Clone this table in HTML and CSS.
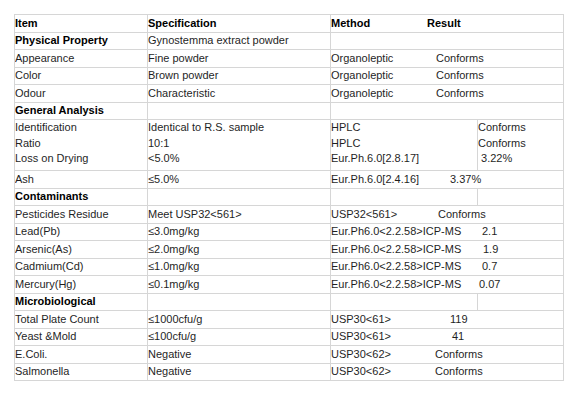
FILE: index.html
```html
<!DOCTYPE html>
<html>
<head>
<meta charset="utf-8">
<link rel="stylesheet" href="styles.css">
</head>
<body>
<table class="spec">
  <colgroup>
    <col class="c1"><col class="c2"><col class="c3"><col class="c4">
  </colgroup>
  <tr class="head">
    <th>Item</th><th>Specification</th>
    <th colspan="2"><span class="m w96">Method</span>Result</th>
  </tr>
  <tr>
    <th>Physical Property</th><td>Gynostemma extract powder</td><td colspan="2"></td>
  </tr>
  <tr><td>Appearance</td><td>Fine powder</td><td colspan="2"><span class="m w105">Organoleptic</span>Conforms</td></tr>
  <tr><td>Color</td><td>Brown powder</td><td colspan="2"><span class="m w105">Organoleptic</span>Conforms</td></tr>
  <tr><td>Odour</td><td>Characteristic</td><td colspan="2"><span class="m w105">Organoleptic</span>Conforms</td></tr>
  <tr><th>General Analysis</th><td></td><td colspan="2"></td></tr>
  <tr class="tall">
    <td>Identification<br>Ratio<br>Loss on Drying</td>
    <td>Identical to R.S. sample<br>10:1<br>&lt;5.0%</td>
    <td>HPLC<br>HPLC<br>Eur.Ph.6.0[2.8.17]</td>
    <td>Conforms<br>Conforms<br>&nbsp;3.22%</td>
  </tr>
  <tr><td>Ash</td><td>≤5.0%</td><td colspan="2"><span class="m w119">Eur.Ph.6.0[2.4.16]</span>3.37%</td></tr>
  <tr><th>Contaminants</th><td></td><td></td><td></td></tr>
  <tr><td>Pesticides Residue</td><td>Meet USP32&lt;561&gt;</td><td colspan="2"><span class="m w107">USP32&lt;561&gt;</span>Conforms</td></tr>
  <tr><td>Lead(Pb)</td><td>≤3.0mg/kg</td><td colspan="2"><span class="m w151">Eur.Ph6.0&lt;2.2.58&gt;ICP-MS</span>2.1</td></tr>
  <tr><td>Arsenic(As)</td><td>≤2.0mg/kg</td><td colspan="2"><span class="m w152">Eur.Ph6.0&lt;2.2.58&gt;ICP-MS</span>1.9</td></tr>
  <tr><td>Cadmium(Cd)</td><td>≤1.0mg/kg</td><td colspan="2"><span class="m w151">Eur.Ph6.0&lt;2.2.58&gt;ICP-MS</span>0.7</td></tr>
  <tr><td>Mercury(Hg)</td><td>≤0.1mg/kg</td><td colspan="2"><span class="m w148">Eur.Ph6.0&lt;2.2.58&gt;ICP-MS</span>0.07</td></tr>
  <tr><th>Microbiological</th><td></td><td></td><td></td></tr>
  <tr><td>Total Plate Count</td><td>≤1000cfu/g</td><td colspan="2"><span class="m w119">USP30&lt;61&gt;</span>119</td></tr>
  <tr><td>Yeast &amp;Mold</td><td>≤100cfu/g</td><td colspan="2"><span class="m w121">USP30&lt;61&gt;</span>41</td></tr>
  <tr><td>E.Coli.</td><td>Negative</td><td colspan="2"><span class="m w104">USP30&lt;62&gt;</span>Conforms</td></tr>
  <tr><td>Salmonella</td><td>Negative</td><td colspan="2"><span class="m w104">USP30&lt;62&gt;</span>Conforms</td></tr>
</table>
</body>
</html>
```
FILE: styles.css
```css
html, body {
  margin: 0;
  padding: 0;
  background: #fff;
}
body {
  padding: 14px 0 0 14px;
  font-family: "Liberation Sans", Arial, sans-serif;
  font-size: 11px;
  color: #1f1f1f;
}
.spec {
  border-collapse: collapse;
  table-layout: fixed;
  width: 549px;
}
.c1 { width: 133px; }
.c2 { width: 183px; }
.c3 { width: 147px; }
.c4 { width: 86px; }
.spec tr { height: 17.5px; }
.spec td, .spec th {
  border: 1px solid #d6d6d6;
  padding: 0;
  line-height: 15.5px;
  text-align: left;
  vertical-align: middle;
  white-space: nowrap;
  overflow: hidden;
}
.spec th {
  font-weight: bold;
  color: #000;
}
.spec tr.tall { height: 51.4px; }
.spec tr.tall td { vertical-align: top; }
.m { display: inline-block; }
.w96 { width: 96px; }
.w104 { width: 104px; }
.w105 { width: 105px; }
.w107 { width: 107px; }
.w119 { width: 119px; }
.w121 { width: 121px; }
.w148 { width: 148px; }
.w151 { width: 151px; }
.w152 { width: 152px; }
```
